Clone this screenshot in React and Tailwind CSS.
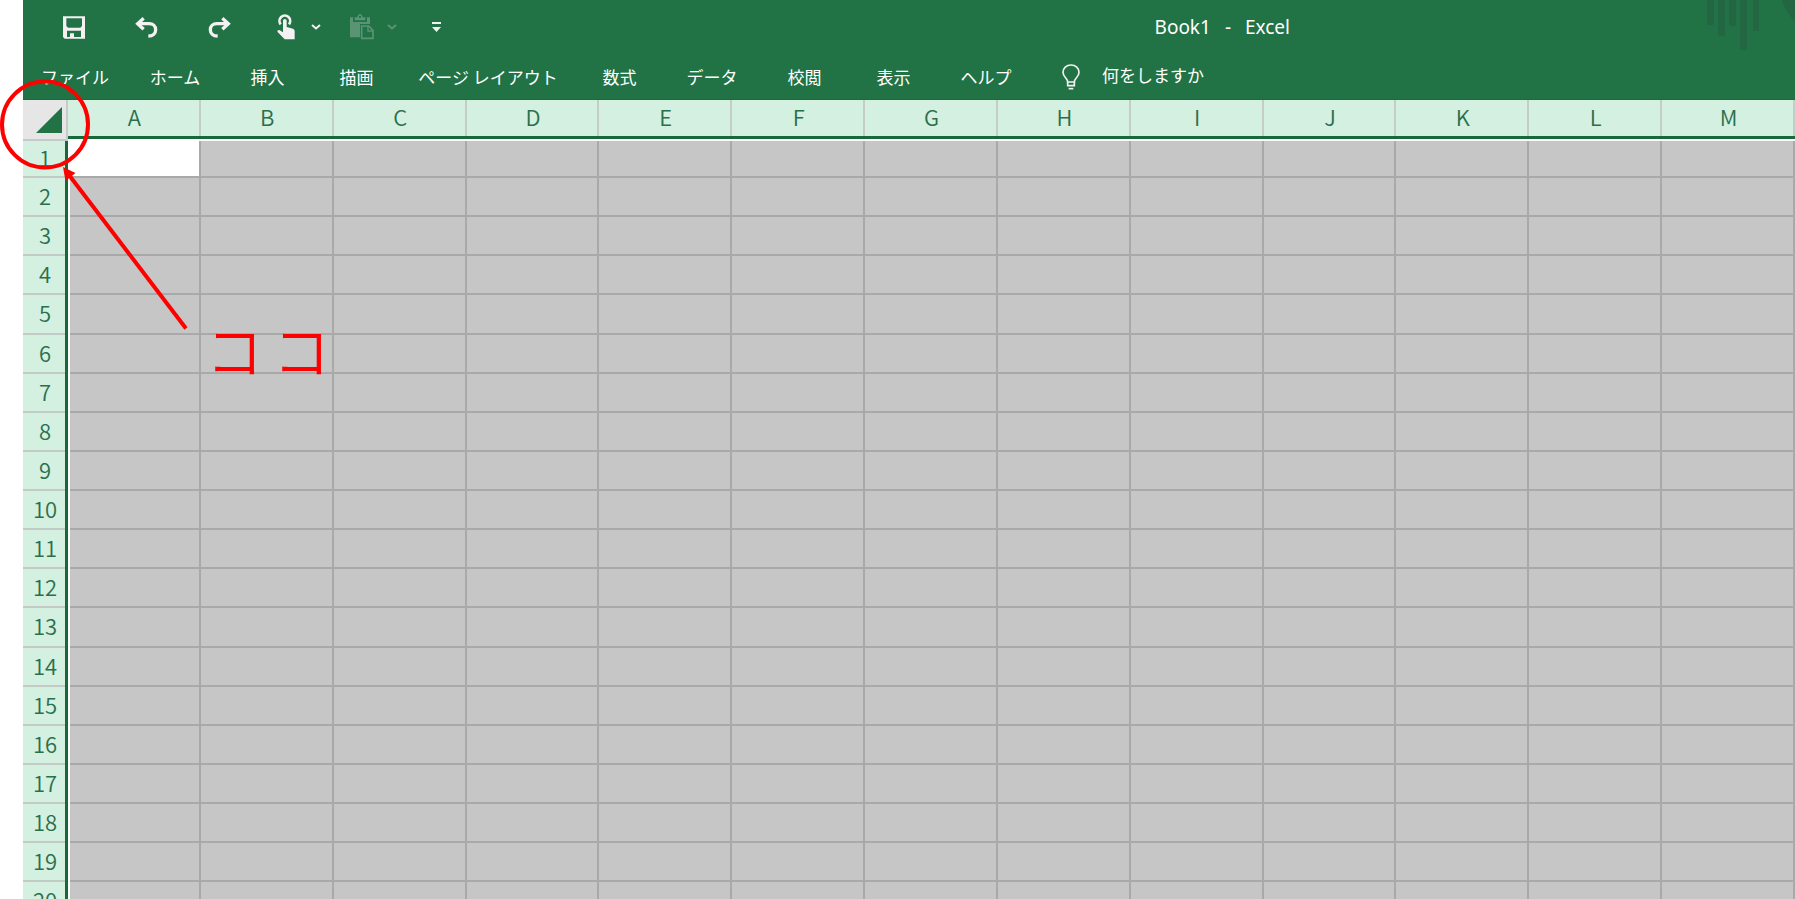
import React from "react";

const COLUMNS = ["A", "B", "C", "D", "E", "F", "G", "H", "I", "J", "K", "L", "M"];
const ROWS = Array.from({ length: 20 }, (_, i) => i + 1);

const TABS = [
  { label: "ファイル", width: "w-[104px]" },
  { label: "ホーム", width: "w-[96px]" },
  { label: "挿入", width: "w-[89px]" },
  { label: "描画", width: "w-[89px]" },
  { label: "ページ レイアウト", width: "w-[174px]" },
  { label: "数式", width: "w-[89px]" },
  { label: "データ", width: "w-[96px]" },
  { label: "校閲", width: "w-[89px]" },
  { label: "表示", width: "w-[89px]" },
  { label: "ヘルプ", width: "w-[96px]" },
];

function SaveIcon() {
  return (
    <svg width="22" height="23" viewBox="0 0 66 67" fill="none" aria-hidden="true">
      <path
        fill="#f3f1f1"
        fillRule="evenodd"
        d="M0 0H66V67H5L0 62ZM10 6V29L15 34H52L57 29V6ZM12 43V62H21V51H33V62H54V43Z"
      />
      <path fill="#f3f1f1" d="M24 54h6v8h-6z" />
    </svg>
  );
}

function UndoIcon() {
  return (
    <svg width="23" height="21" viewBox="0 0 69 63" fill="none" stroke="#f3f1f1" strokeWidth="10" aria-hidden="true">
      <path d="M26 4L8 20L26 37" />
      <path d="M8 20H42C55 20 62 28 62 38C62 49 54 57 40 57" />
    </svg>
  );
}

function RedoIcon() {
  return (
    <svg width="23" height="21" viewBox="0 0 69 63" fill="none" stroke="#f3f1f1" strokeWidth="10" aria-hidden="true">
      <path d="M43 4L61 20L43 37" />
      <path d="M61 20H27C14 20 7 28 7 38C7 49 15 57 29 57" />
    </svg>
  );
}

function TouchIcon() {
  return (
    <svg width="18" height="26" viewBox="0 0 54 78" fill="none" aria-hidden="true">
      <path d="M11 31A16 16 0 1 1 36 31" stroke="#f3f1f1" strokeWidth="8" />
      <path
        fill="#f3f1f1"
        d="M18 20Q18 15 23.500 15Q29 15 29 20V39L48 44Q53 46 53 51V76H23L1 53Q1 47 7 48L18 55Z"
      />
    </svg>
  );
}

function PasteIcon() {
  return (
    <svg width="24" height="26" viewBox="0 0 72 78" fill="none" aria-hidden="true">
      <path fill="#5b9473" d="M0 10H9V24H51V10H60V30H30V70H0Z" />
      <path fill="#5b9473" fillRule="evenodd" d="M14 19V10H22Q23 1 30 1Q37 1 38 10H46V19ZM27 6H33V11H27Z" />
      <path d="M35 36H56L69 49V73H35Z" stroke="#5b9473" strokeWidth="5" />
      <path d="M54 36V51H69" stroke="#5b9473" strokeWidth="4" />
    </svg>
  );
}

function Chevron({ dim }) {
  return (
    <svg width="10" height="6" viewBox="0 0 10 6" fill="none" aria-hidden="true">
      <path d="M1 1L5 4.500L9 1" stroke={dim ? "#5b9473" : "#f3f1f1"} strokeWidth="2" />
    </svg>
  );
}

function CustomizeIcon() {
  return (
    <svg width="9" height="11" viewBox="0 0 9 11" aria-hidden="true">
      <path fill="#f3f1f1" d="M0 0H9V2H0ZM0 5H9L4.500 10Z" />
    </svg>
  );
}

function BulbIcon() {
  return (
    <svg width="18" height="26" viewBox="0 0 54 78" fill="none" stroke="#f3f1f1" strokeWidth="5" aria-hidden="true">
      <path d="M17 54C17 42 3 40 3 25C3 12 13 3 27 3C41 3 51 12 51 25C51 40 37 42 37 54Z" />
      <path d="M17 54V65H37V54" />
      <path d="M20 74H34" />
    </svg>
  );
}

function TitleArt() {
  return (
    <svg width="88" height="52" viewBox="0 0 88 52" className="self-start" fill="#236642" aria-hidden="true">
      <path d="M0 0h7v25H0zM11 0h7v36h-7zM22 0h7v26h-7zM33 0h7v50h-7zM46 0h6v31h-6z" />
      <path d="M75 0H88V21Q79 13 75 0Z" />
    </svg>
  );
}

function TitleBar() {
  return (
    <div className="flex h-[50px] items-center overflow-hidden pl-3.5">
      <div className="flex h-[46px] items-center">
        <button aria-label="上書き保存" className="flex w-[73px] justify-center pt-1"><SaveIcon /></button>
        <button aria-label="元に戻す" className="flex w-[73px] justify-center pt-1"><UndoIcon /></button>
        <button aria-label="やり直し" className="flex w-[73px] justify-center pt-1"><RedoIcon /></button>
        <div className="flex w-[76px] items-center justify-center pt-1">
          <button aria-label="タッチ/マウス モードの切り替え" className="flex w-11 justify-center"><TouchIcon /></button>
          <button aria-label="モードの選択" className="flex w-4 justify-center"><Chevron /></button>
        </div>
        <div className="flex w-[76px] items-center justify-center pt-1">
          <button disabled aria-label="貼り付け" className="flex w-11 justify-center"><PasteIcon /></button>
          <button disabled aria-label="貼り付けオプション" className="flex w-4 justify-center"><Chevron dim /></button>
        </div>
        <button aria-label="クイック アクセス ツール バーのユーザー設定" className="flex w-14 justify-center pt-1">
          <CustomizeIcon />
        </button>
      </div>
      <h1 className="mr-[417px] ml-auto flex gap-3.5 pt-1 font-['Noto_Sans'] text-[19px] leading-6 text-white">
        <span>Book1</span>
        <span>-</span>
        <span>Excel</span>
      </h1>
      <TitleArt />
    </div>
  );
}

function Ribbon() {
  return (
    <nav className="flex h-[50px] items-center border-b border-[#1b6a3e] text-[17px] leading-6 whitespace-nowrap text-white">
      {TABS.map((tab) => (
        <button key={tab.label} className={`${tab.width} shrink-0 pt-1 text-center`}>
          {tab.label}
        </button>
      ))}
      <button className="ml-7 flex shrink-0 items-center gap-[22px] pt-1">
        <BulbIcon />
        <span className="pb-1">何をしますか</span>
      </button>
    </nav>
  );
}

function Sheet() {
  return (
    <table className="w-full table-fixed border-separate border-spacing-0 text-[22px] leading-7 text-[#2a6f4b]">
      <thead>
        <tr className="h-[41px]">
          <th className="w-[45px] border-r-2 border-b-2 border-r-[#c9c9c9] border-b-[#c3c9c5] bg-[#e6e6e6] p-0">
            <button aria-label="すべて選択" className="flex w-full justify-end pr-1">
              <svg width="26" height="26" viewBox="0 0 26 26" aria-hidden="true">
                <path d="M26 0V26H0Z" fill="#217346" />
              </svg>
            </button>
          </th>
          {COLUMNS.map((name) => (
            <th key={name} scope="col" className="border-b-2 border-white p-0 font-[350]">
              <div className="h-[39px] border-b-3 border-[#17693a] bg-[#d3f0e0] pt-0.5 shadow-[inset_-2px_0_0_#c6ccc8]">
                {name}
              </div>
            </th>
          ))}
        </tr>
      </thead>
      <tbody>
        {ROWS.map((row) => (
          <tr key={row} className={row === 1 ? "h-[37px]" : row % 8 === 5 ? "h-10" : "h-[39px]"}>
            <th
              scope="row"
              className="border-r-3 border-[#17693a] bg-[#d3f0e0] pt-0 pr-0 pb-1.5 pl-0.5 font-[350] shadow-[inset_0_-2px_0_#c3c9c5]"
            >
              {row}
            </th>
            {COLUMNS.map((name, col) => (
              <td
                key={name}
                className={`p-0 shadow-[inset_-2px_-2px_0_#a9a9a9] ${col === 0 ? "border-l-2 border-white" : ""} ${
                  row === 1 && col === 0 ? "bg-white" : "bg-[#c6c6c6]"
                }`}
              />
            ))}
          </tr>
        ))}
      </tbody>
    </table>
  );
}

function Annotations() {
  return (
    <div className="pointer-events-none absolute inset-0">
      <svg className="absolute top-0 left-0" width="200" height="340" viewBox="0 0 200 340" fill="none" aria-hidden="true">
        <circle cx="45" cy="124.500" r="43" stroke="#ff0000" strokeWidth="4" />
        <path d="M186 328.500L69 175" stroke="#ff0000" strokeWidth="4" />
        <path d="M63 167L75.500 173L65.500 181Z" fill="#ff0000" />
      </svg>
      <p className="absolute top-[320px] left-[206px] flex gap-2.5 text-[57px] leading-[56px] font-[350] text-[#ff0000]">
        <span>コ</span>
        <span>コ</span>
      </p>
    </div>
  );
}

export default function App() {
  return (
    <div className="relative h-screen overflow-hidden bg-white pl-[23px] font-['Noto_Sans_CJK_JP',sans-serif]">
      <header className="bg-[#217346]">
        <TitleBar />
        <Ribbon />
      </header>
      <main>
        <Sheet />
      </main>
      <Annotations />
    </div>
  );
}
